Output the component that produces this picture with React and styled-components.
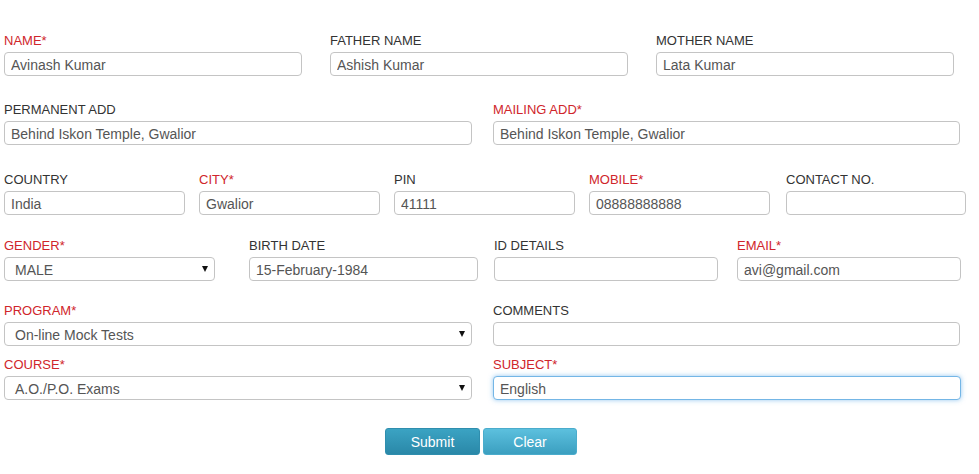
import React from 'react';
import styled, { createGlobalStyle } from 'styled-components';

const GlobalStyle = createGlobalStyle`
    html, body {
        margin: 0;
        padding: 0;
        background: #ffffff;
        font-family: Arial, "Liberation Sans", sans-serif;
    }
`;

const Form = styled.form`
    width: 962px;
    padding: 32px 0 0 4px;
`;

const Row = styled.div`
    display: flex;
    align-items: flex-start;
    margin-top: ${(p) => p.top || 0}px;
`;

const Field = styled.div`
    display: flex;
    flex-direction: column;
    flex: 0 0 ${(p) => p.w}px;
    margin-left: ${(p) => p.ml || 0}px;
`;

const Label = styled.label`
    display: block;
    height: 17px;
    padding-top: 1px;
    box-sizing: border-box;
    line-height: 16px;
    margin-bottom: 3px;
    font-size: 13px;
    color: ${(p) => (p.required ? '#d0252b' : '#333333')};
    white-space: nowrap;
`;

const Input = styled.input`
    box-sizing: border-box;
    width: 100%;
    height: 24px;
    padding: 2px 6px 0;
    font-family: Arial, "Liberation Sans", sans-serif;
    font-size: 14px;
    color: #555555;
    background: #ffffff;
    border: 1px solid ${(p) => (p.focused ? '#74b6e6' : '#c4c4c4')};
    border-radius: 4px;
    box-shadow: ${(p) => (p.focused ? '0 0 5px rgba(102, 175, 233, 0.7)' : 'none')};
    outline: none;
`;

const SelectBox = styled.div`
    position: relative;
    box-sizing: border-box;
    height: 24px;
    padding: 2px 10px 0;
    display: flex;
    align-items: center;
    font-size: 14px;
    color: #555555;
    background: #ffffff;
    border: 1px solid #c4c4c4;
    border-radius: 4px;
`;

const Arrow = styled.span`
    position: absolute;
    right: 6px;
    top: 8px;
    width: 0;
    height: 0;
    border-left: 3.5px solid transparent;
    border-right: 3.5px solid transparent;
    border-top: 6px solid #111111;
`;

const ButtonRow = styled.div`
    display: flex;
    gap: 3px;
    margin-top: 28px;
    padding-left: 381px;
`;

const Button = styled.button`
    box-sizing: border-box;
    width: ${(p) => p.w}px;
    height: 27px;
    font-family: Arial, "Liberation Sans", sans-serif;
    font-size: 14px;
    color: #ffffff;
    border: 1px solid ${(p) => (p.light ? '#4aaccc' : '#2f8eae')};
    border-radius: 3px;
    background: ${(p) =>
        p.light
            ? 'linear-gradient(to bottom, #5cc0de 0%, #3b9fc0 100%)'
            : 'linear-gradient(to bottom, #3ba3c3 0%, #2a88a8 100%)'};
    cursor: pointer;
`;

const Text = ({ label, required, value, focused, w, ml }) => (
    <Field w={w} ml={ml}>
        <Label required={required}>{label}{required && '*'}</Label>
        <Input defaultValue={value} focused={focused} readOnly />
    </Field>
);

const Select = ({ label, required, value, w, ml }) => (
    <Field w={w} ml={ml}>
        <Label required={required}>{label}{required && '*'}</Label>
        <SelectBox>
            {value}
            <Arrow />
        </SelectBox>
    </Field>
);

const App = () => {
    return (
        <>
            <GlobalStyle />
            <Form onSubmit={(e) => e.preventDefault()}>
                <Row>
                    <Text w={298} label="NAME" required value="Avinash Kumar" />
                    <Text w={298} ml={28} label="FATHER NAME" value="Ashish Kumar" />
                    <Text w={298} ml={28} label="MOTHER NAME" value="Lata Kumar" />
                </Row>
                <Row top={25}>
                    <Text w={468} label="PERMANENT ADD" value="Behind Iskon Temple, Gwalior" />
                    <Text w={467} ml={21} label="MAILING ADD" required value="Behind Iskon Temple, Gwalior" />
                </Row>
                <Row top={26}>
                    <Text w={181} label="COUNTRY" value="India" />
                    <Text w={181} ml={14} label="CITY" required value="Gwalior" />
                    <Text w={181} ml={14} label="PIN" value="41111" />
                    <Text w={181} ml={14} label="MOBILE" required value="08888888888" />
                    <Text w={180} ml={16} label="CONTACT NO." value="" />
                </Row>
                <Row top={22}>
                    <Select w={211} label="GENDER" required value="MALE" />
                    <Text w={229} ml={34} label="BIRTH DATE" value="15-February-1984" />
                    <Text w={224} ml={16} label="ID DETAILS" value="" />
                    <Text w={224} ml={19} label="EMAIL" required value="avi@gmail.com" />
                </Row>
                <Row top={21}>
                    <Select w={468} label="PROGRAM" required value="On-line Mock Tests" />
                    <Text w={467} ml={21} label="COMMENTS" value="" />
                </Row>
                <Row top={10}>
                    <Select w={468} label="COURSE" required value="A.O./P.O. Exams" />
                    <Text w={468} ml={21} label="SUBJECT" required value="English" focused />
                </Row>
                <ButtonRow>
                    <Button type="submit" w={95}>Submit</Button>
                    <Button type="button" w={94} light>Clear</Button>
                </ButtonRow>
            </Form>
        </>
    );
};

export default App;
